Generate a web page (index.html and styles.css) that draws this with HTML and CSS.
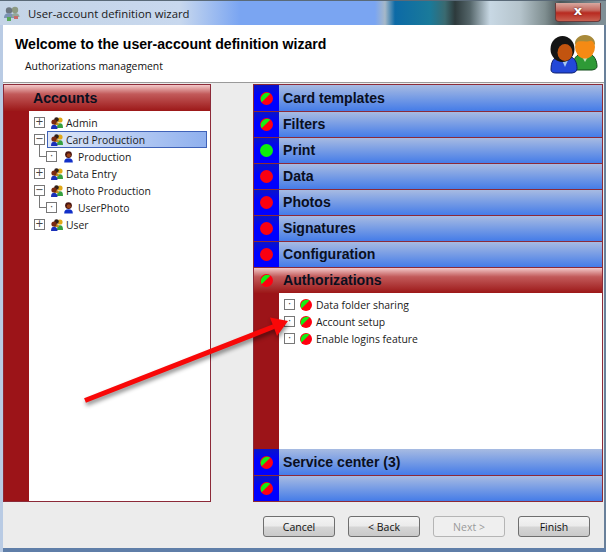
FILE: index.html
```html
<!DOCTYPE html>
<html lang="en">
<head>
<meta charset="utf-8">
<title>User-account definition wizard</title>
<link rel="stylesheet" href="styles.css">
</head>
<body>
<svg class="defs" width="0" height="0" aria-hidden="true">
  <defs>
    <symbol id="dot-half" viewBox="0 0 12 12">
      <circle cx="6" cy="6" r="6" fill="#ff0010"/>
      <path d="M1.500 9.500A5.900 5.900 0 0 1 9.500 1.500Z" fill="#12f012"/>
    </symbol>
    <symbol id="group-small" viewBox="0 0 12 12">
      <circle cx="9" cy="3" r="2.600" fill="#e0a818"/>
      <path d="M6 11c0-3.500 1-4.800 3-4.800s3 1.300 3 4.800z" fill="#36a040"/>
      <circle cx="5.500" cy="2.600" r="2.300" fill="#30201a"/>
      <path d="M3 8c0-2 1-3 2.500-3S8 6 8 8z" fill="#c09020"/>
      <circle cx="3" cy="5" r="2.600" fill="#7a2a10"/>
      <path d="M0 12c0-3.200 1-4.200 3-4.200s3.500 1 3.500 4.200z" fill="#1a30b8"/>
    </symbol>
    <symbol id="person-small" viewBox="0 0 12 12">
      <circle cx="5.500" cy="3.600" r="3.400" fill="#4a1610"/>
      <circle cx="5.800" cy="4.200" r="2" fill="#9c4418"/>
      <path d="M1.200 11.500c0-3 1.300-4.200 4.300-4.200s4.300 1.200 4.300 4.200z" fill="#1230c8"/>
    </symbol>
  </defs>
</svg>
<div class="window">
  <div class="titlebar">
    <svg class="title-icon" width="16" height="16" viewBox="0 0 16 16">
      <circle cx="11" cy="4" r="3.200" fill="#8d9a82"/>
      <circle cx="5" cy="4.500" r="3.200" fill="#6d7780"/>
      <path d="M0 12c0-3.500 2-4.800 5-4.800s5 1.300 5 4.800z" fill="#7c93b4"/>
      <path d="M8 11c0-3 1-4 3-4s4.500 1 4.500 4z" fill="#93a79a"/>
      <rect x="3" y="11" width="4" height="4" fill="#58a858"/>
      <rect x="10" y="10" width="4" height="3" fill="#c86a6a"/>
    </svg>
    <span class="title-text">User-account definition wizard</span>
    <div class="close">x</div>
  </div>
  <div class="content">
    <header class="banner">
      <div class="banner-text">
        <h1>Welcome to the user-account definition wizard</h1>
        <p>Authorizations management</p>
      </div>
      <svg class="banner-icon" width="48" height="39" viewBox="0 0 48 39">
        <path d="M23 34c0-9 2-13.500 7-14.500 3 2 8 2 11 0 3 1 6 6 6 12 0 2-2 3-5 3.500H27c-2 0-4 0-4-1z" fill="#2e9a36" stroke="#0f4a18"/>
        <path d="M31 20l4 7 4-7z" fill="#c0e4b8"/>
        <ellipse cx="35" cy="12" rx="10" ry="11.500" fill="#f58a14"/>
        <path d="M25 11c-1-7 4-11 10-11s11 4 10 11c-1-3-2-5-4-5.500-4 2-10 0-13 1-2 1-2.500 3-3 4.500z" fill="#a88a3a"/>
        <path d="M1 35c0-8 2-12 8-13.500 4 2 9 2 11 0 5 1.500 7 6 7 12 0 3-2 4-5 4.500H6c-3 0-5-1-5-3z" fill="#2348d8" stroke="#0c1f70"/>
        <path d="M11 23l4 9 4-9z" fill="#a8c8f0"/>
        <ellipse cx="12.500" cy="14" rx="12" ry="13" fill="#141414"/>
        <ellipse cx="15" cy="17.500" rx="7.500" ry="8.500" fill="#c2540f"/>
      </svg>
    </header>
    <main class="panels">
      <section class="panel accounts">
        <div class="bar bar-red"><span class="bar-label">Accounts</span></div>
        <div class="side-body">
          <ul class="tree">
            <li class="node"><span class="box">+</span><svg class="ic"><use href="#group-small"/></svg><span class="label">Admin</span></li>
            <li class="node"><span class="box">&#8722;</span><span class="selected"><svg class="ic-sel"><use href="#group-small"/></svg><span class="label">Card Production</span></span></li>
            <li class="node child"><span class="box dotbox">&#183;</span><svg class="ic"><use href="#person-small"/></svg><span class="label">Production</span></li>
            <li class="node"><span class="box">+</span><svg class="ic"><use href="#group-small"/></svg><span class="label">Data Entry</span></li>
            <li class="node"><span class="box">&#8722;</span><svg class="ic"><use href="#group-small"/></svg><span class="label">Photo Production</span></li>
            <li class="node child"><span class="box dotbox">&#183;</span><svg class="ic"><use href="#person-small"/></svg><span class="label">UserPhoto</span></li>
            <li class="node"><span class="box">+</span><svg class="ic"><use href="#group-small"/></svg><span class="label">User</span></li>
          </ul>
        </div>
      </section>
      <section class="panel sections">
        <div class="bar bar-blue"><span class="cell"><svg class="dot"><use href="#dot-half"/></svg></span><span class="bar-label">Card templates</span></div>
        <div class="bar bar-blue"><span class="cell"><svg class="dot"><use href="#dot-half"/></svg></span><span class="bar-label">Filters</span></div>
        <div class="bar bar-blue"><span class="cell"><i class="dot solid green"></i></span><span class="bar-label">Print</span></div>
        <div class="bar bar-blue"><span class="cell"><i class="dot solid red"></i></span><span class="bar-label">Data</span></div>
        <div class="bar bar-blue"><span class="cell"><i class="dot solid red"></i></span><span class="bar-label">Photos</span></div>
        <div class="bar bar-blue"><span class="cell"><i class="dot solid red"></i></span><span class="bar-label">Signatures</span></div>
        <div class="bar bar-blue"><span class="cell"><i class="dot solid red"></i></span><span class="bar-label">Configuration</span></div>
        <div class="bar bar-red"><span class="cell"><svg class="dot"><use href="#dot-half"/></svg></span><span class="bar-label">Authorizations</span></div>
        <div class="side-body grow">
          <ul class="tree auth">
            <li class="node"><span class="box dotbox">&#183;</span><svg class="dot-sm"><use href="#dot-half"/></svg><span class="label">Data folder sharing</span></li>
            <li class="node"><span class="box dotbox">&#183;</span><svg class="dot-sm"><use href="#dot-half"/></svg><span class="label">Account setup</span></li>
            <li class="node"><span class="box dotbox">&#183;</span><svg class="dot-sm"><use href="#dot-half"/></svg><span class="label">Enable logins feature</span></li>
          </ul>
        </div>
        <div class="bar bar-blue"><span class="cell"><svg class="dot"><use href="#dot-half"/></svg></span><span class="bar-label">Service center (3)</span></div>
        <div class="bar bar-blue"><span class="cell"><svg class="dot"><use href="#dot-half"/></svg></span><span class="bar-label"></span></div>
      </section>
    </main>
    <footer class="footer">
      <button class="btn">Cancel</button>
      <button class="btn">&lt; Back</button>
      <button class="btn" disabled>Next &gt;</button>
      <button class="btn">Finish</button>
    </footer>
  </div>
  <svg class="arrow" width="230" height="100" viewBox="0 0 230 100">
    <g class="arrow-g">
      <path d="M5 90.500L194 16.500" stroke="#f80808" stroke-width="5"/>
      <path d="M208 11L190 7.500L197 26Z" fill="#f80808"/>
    </g>
  </svg>
</div>
</body>
</html>
```
FILE: styles.css
```css
* { box-sizing: border-box; }
html, body { margin: 0; padding: 0; }
body { width: 606px; height: 552px; overflow: hidden; font-family: "Liberation Sans", Arial, sans-serif; background: #fff; }
.defs { position: absolute; }
.window {
  position: relative;
  width: 606px;
  height: 552px;
  display: flex;
  flex-direction: column;
  padding: 0 2px 4px 3px;
  background: linear-gradient(#b9cbe4, #b9cbe4) left/3px 100% no-repeat,
    linear-gradient(#5f7ea8, #5f7ea8) bottom/100% 4px no-repeat,
    linear-gradient(#69809a, #69809a) right/2px 100% no-repeat, #ececec;
}
.titlebar {
  height: 25px;
  margin: 0 -2px 0 -3px;
  padding: 1px 5px 0 4px;
  display: flex;
  align-items: center;
  gap: 8px;
  border-top: 1px solid #5a6a78;
  background: linear-gradient(90deg, #c4d4e6 0, #c8d8ee 180px, #7aa5f2 240px, #7aa5f2 375px, #a6b8c8 385px, #0c6aa6 395px, #1a7a9a 430px, #3a6a70 445px, #2d3a3c 455px, #55666a 470px, #c8d8e4 490px, #b5c4cc 520px, #7f8e90 545px, #4a5658 560px, #7f8f96 600px);
}
.title-icon { flex: none; }
.title-text { font-family: "Open Sans", sans-serif; font-size: 11.35px; color: #1a1a1a; }
.close {
  margin-left: auto;
  margin-top: -3px;
  width: 46px;
  height: 19px;
  border: 1px solid #6a3a3a;
  border-top: 0;
  border-radius: 0 0 4px 4px;
  background: linear-gradient(#d8a8a0 0, #c46a60 40%, #b82a20 55%, #c86050 100%);
  color: #fff;
  font: bold 13px/16px "DejaVu Sans", sans-serif;
  text-align: center;
  text-shadow: 0 0 2px #411;
}
.content { flex: 1; display: flex; flex-direction: column; min-height: 0; background: #ececec; }
.banner {
  height: 58px;
  padding: 0 6px 0 12px;
  display: flex;
  justify-content: space-between;
  align-items: flex-start;
  background: #fff;
  border-bottom: 1px solid #9a9a9a;
}
.banner h1 { margin: 11px 0 0; font-size: 14.1px; line-height: 16px; font-weight: bold; color: #000; }
.banner p { margin: 7px 0 0 10px; font-family: "Open Sans", sans-serif; font-size: 10.4px; line-height: 14px; color: #111; }
.banner-icon { margin-top: 10px; flex: none; }
.panels { display: flex; gap: 42px; height: 418px; margin-top: 1px; }
.panel { display: flex; flex-direction: column; border: 1px solid #8c2a38; background: #fff; }
.accounts { width: 208px; }
.sections { width: 350px; }
.bar { height: 26px; flex: none; display: flex; align-items: center; }
.sections .bar + .bar { border-top: 1px solid #8c2a38; }
.bar-blue { background: linear-gradient(#a7bbe2, #457ce8); }
.bar-red { background: linear-gradient(#f3c9c9, #c25a5a 35%, #9c1818); }
.bar-label { font-size: 14.1px; line-height: 16px; margin-top: -1px; font-weight: bold; color: #0a0f1e; }
.accounts .bar-label { margin-left: 29px; }
.cell { width: 25px; align-self: stretch; display: flex; align-items: center; justify-content: center; margin-right: 4px; }
.bar-blue .cell { background: linear-gradient(#0a14c8, #0000ff 45%); }
.dot { width: 13px; height: 13px; display: block; }
.solid { border-radius: 50%; }
.green { background: #0cf00c; }
.red { background: #fa0010; }
.side-body { flex: 1; display: flex; min-height: 0; padding-left: 25px; background: #9c1418; }
.tree { flex: 1; min-width: 0; margin: 0; padding: 3px 0 0 5px; list-style: none; background: #fff; font-family: "Open Sans", sans-serif; font-size: 10.4px; }
.grow { flex: 1; }
.node { position: relative; height: 17px; display: flex; align-items: center; color: #1a1a1a; }
.box {
  width: 11px;
  height: 11px;
  flex: none;
  border: 1px solid #777;
  font: 10px/8px "DejaVu Sans", sans-serif;
  text-align: center;
  color: #444;
}
.dotbox { line-height: 7px; }
.ic { width: 12px; height: 12px; flex: none; margin-left: 6px; }
.ic-sel { width: 12px; height: 12px; flex: none; }
.dot-sm { width: 12px; height: 12px; flex: none; margin-left: 5px; }
.label { margin-left: 3px; line-height: 16px; white-space: nowrap; }
.auth .label { margin-left: 4px; }
.selected {
  margin-left: 2px;
  padding-left: 3px;
  width: 160px;
  height: 17px;
  display: flex;
  align-items: center;
  border: 1px solid #3f62b8;
  background: linear-gradient(90deg, #dfe8f8, #8fb0ee);
}
.child { padding-left: 12px; }
.child::before {
  content: "";
  position: absolute;
  left: 5px;
  top: -3px;
  width: 7px;
  height: 11px;
  border-left: 1px solid #777;
  border-bottom: 1px solid #777;
}
.auth { padding-top: 3px; }
.footer { flex: 1; display: flex; justify-content: flex-end; gap: 13px; padding: 14px 14px 0 0; }
.btn {
  width: 72px;
  height: 21px;
  padding: 0;
  border: 1px solid #6f6f6f;
  border-radius: 3px;
  background: linear-gradient(#f4f4f4 0, #ebebeb 48%, #d6d6d6 52%, #c9c9c9 100%);
  font-family: "Open Sans", sans-serif;
  font-size: 10.5px;
  color: #111;
}
.btn:disabled { background: #efefef; border-color: #b5b5b5; color: #9a9a9a; }
.arrow { position: absolute; left: 80px; top: 310px; pointer-events: none; }
.arrow-g { filter: drop-shadow(1px 3px 2px rgba(0,0,0,.45)); }
```
